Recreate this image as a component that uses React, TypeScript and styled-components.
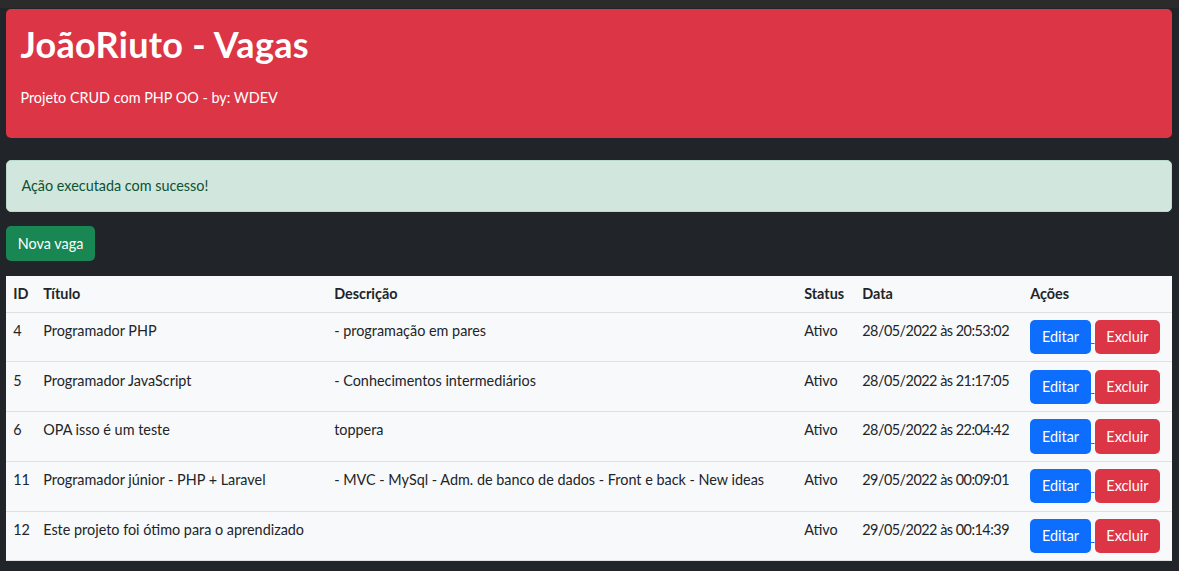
import styled, { createGlobalStyle } from "styled-components";

const GlobalStyle = createGlobalStyle`
  html, body {
    margin: 0;
    padding: 0;
    background: #212529;
  }
  body {
    font-family: "Segoe UI", Lato, "Liberation Sans", sans-serif;
    font-size: 14.4px;
    line-height: 1.5;
    color: #212529;
  }
  * { box-sizing: border-box; }
`;

const TopStrip = styled.div`
  height: 8px;
  background: #2b2b2c;
`;

const Page = styled.main`
  width: 1166px;
  margin-left: 6px;
  padding-top: 1px;
  padding-bottom: 10px;
  display: flex;
  flex-direction: column;
  align-items: flex-start;
`;

const Jumbotron = styled.header`
  width: 100%;
  background: #dc3545;
  color: #fff;
  border-radius: 5px;
  padding: 14.4px;
  margin-bottom: 22px;
`;

const Title = styled.h1`
  margin: 0 0 20.6px;
  font-size: 36px;
  font-weight: 700;
  line-height: 1.2;
  letter-spacing: 0.3px;
`;

const Subtitle = styled.p`
  margin: 0 0 14.4px;
  font-size: 14.4px;
  line-height: 21.6px;
`;

const Alert = styled.div`
  width: 100%;
  background: #d1e7dd;
  border: 1px solid #badbcc;
  color: #0f5132;
  border-radius: 5px;
  padding: 14.4px;
  line-height: 21.6px;
  margin-bottom: 14.4px;
`;

const Button = styled.button<{ $variant: "success" | "primary" | "danger" }>`
  display: inline-block;
  font-family: inherit;
  font-size: 14.4px;
  line-height: 21.6px;
  padding: 5.4px 10.8px;
  border: 1px solid transparent;
  border-radius: 5px;
  color: #fff;
  cursor: pointer;
  background: ${(p) =>
    p.$variant === "success" ? "#198754" : p.$variant === "primary" ? "#0d6efd" : "#dc3545"};
`;

const Toolbar = styled.section`
  margin-bottom: 15px;
`;

const Table = styled.table`
  width: 100%;
  table-layout: fixed;
  border-collapse: collapse;
  background: #f8f9fa;
  vertical-align: top;
`;

const Th = styled.th`
  text-align: left;
  font-weight: 700;
  padding: 7.2px;
  line-height: 21.6px;
  border-bottom: 1px solid #dfe0e1;
  white-space: nowrap;
`;

const Td = styled.td<{ $tight?: boolean }>`
  padding: 7.2px;
  line-height: 21.6px;
  border-bottom: 1px solid #dfe0e1;
  vertical-align: top;
  white-space: nowrap;
  letter-spacing: ${(p) => (p.$tight ? "-0.5px" : "normal")};
`;

const ActionLink = styled.a`
  color: #0d6efd;
  text-decoration: underline;
`;

type Vaga = {
  id: number;
  titulo: string;
  descricao: string;
  status: string;
  data: string;
};

const vagas: Vaga[] = [
  { id: 4, titulo: "Programador PHP", descricao: "- programação em pares", status: "Ativo", data: "28/05/2022 às 20:53:02" },
  { id: 5, titulo: "Programador JavaScript", descricao: "- Conhecimentos intermediários", status: "Ativo", data: "28/05/2022 às 21:17:05" },
  { id: 6, titulo: "OPA isso é um teste", descricao: "toppera", status: "Ativo", data: "28/05/2022 às 22:04:42" },
  {
    id: 11,
    titulo: "Programador júnior - PHP + Laravel",
    descricao: "- MVC - MySql - Adm. de banco de dados - Front e back - New ideas",
    status: "Ativo",
    data: "29/05/2022 às 00:09:01",
  },
  { id: 12, titulo: "Este projeto foi ótimo para o aprendizado", descricao: "", status: "Ativo", data: "29/05/2022 às 00:14:39" },
];

export default function App() {
  return (
    <>
      <GlobalStyle />
      <TopStrip />
      <Page>
        <Jumbotron>
          <Title>JoãoRiuto - Vagas</Title>
          <Subtitle>Projeto CRUD com PHP OO - by: WDEV</Subtitle>
        </Jumbotron>

        <Alert>Ação executada com sucesso!</Alert>

        <Toolbar>
          <Button $variant="success">Nova vaga</Button>
        </Toolbar>

        <Table>
          <colgroup>
            <col style={{ width: 30 }} />
            <col style={{ width: 291 }} />
            <col style={{ width: 470 }} />
            <col style={{ width: 58 }} />
            <col style={{ width: 168 }} />
            <col style={{ width: 149 }} />
          </colgroup>
          <thead>
            <tr>
              <Th>ID</Th>
              <Th>Título</Th>
              <Th>Descrição</Th>
              <Th>Status</Th>
              <Th>Data</Th>
              <Th>Ações</Th>
            </tr>
          </thead>
          <tbody>
            {vagas.map((v) => (
              <tr key={v.id}>
                <Td>{v.id}</Td>
                <Td>{v.titulo}</Td>
                <Td>{v.descricao}</Td>
                <Td>{v.status}</Td>
                <Td $tight>{v.data}</Td>
                <Td>
                  <ActionLink href="#">
                    <Button $variant="primary">Editar</Button>{" "}
                  </ActionLink>
                  <ActionLink href="#">
                    <Button $variant="danger">Excluir</Button>
                  </ActionLink>
                </Td>
              </tr>
            ))}
          </tbody>
        </Table>
      </Page>
    </>
  );
}
